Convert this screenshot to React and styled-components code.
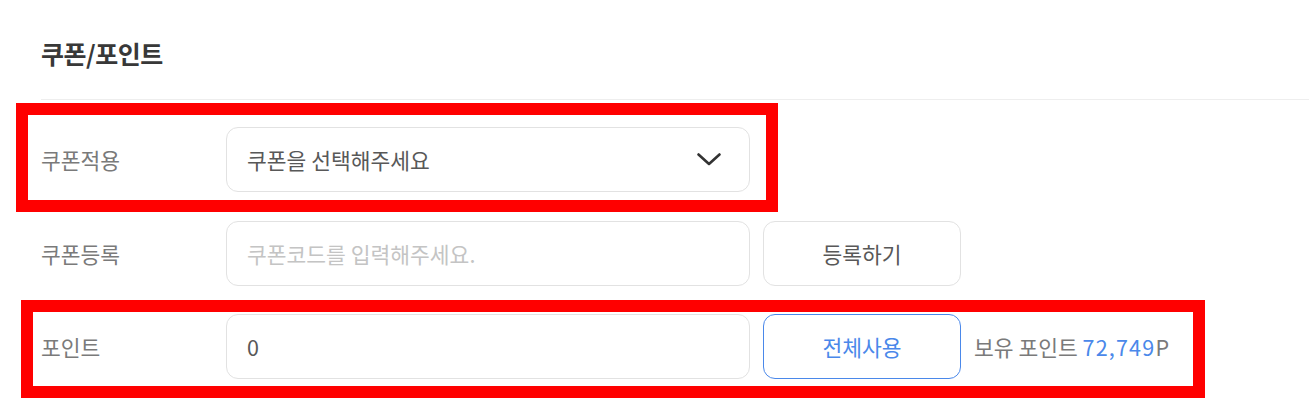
import React from 'react';
import styled, { createGlobalStyle } from 'styled-components';

const GlobalStyle = createGlobalStyle`
  * { box-sizing: border-box; }
  body {
    margin: 0;
    background: #fff;
    font-family: "Noto Sans CJK KR", "Noto Sans", sans-serif;
    color: #333;
  }
`;

const Section = styled.section`
  position: relative;
  width: 1309px;
  height: 420px;
  padding: 36px 0 0 41px;
`;

const Title = styled.h2`
  margin: 0;
  font-size: 25px;
  font-weight: 700;
  color: #383838;
  line-height: 34px;
  letter-spacing: -0.5px;
`;

const Divider = styled.hr`
  margin: 29px 0 0;
  border: 0;
  border-top: 1px solid #eeeeee;
`;

const Form = styled.div`
  display: flex;
  flex-direction: column;
  gap: 28.5px;
  padding-top: 27px;
`;

const Row = styled.div`
  display: flex;
  align-items: center;
  height: 65px;
`;

const Label = styled.div`
  width: 185px;
  font-size: 21.5px;
  color: #7a7a7a;
`;

const Field = styled.div`
  display: flex;
  align-items: center;
  justify-content: space-between;
  width: 524px;
  height: 65px;
  padding: 0 28px 0 20px;
  border: 1px solid #e2e2e2;
  border-radius: 12px;
  font-size: 21.5px;
  color: ${p => (p.$placeholder ? '#c4c4c4' : '#585858')};
`;

const Button = styled.button`
  margin-left: 13px;
  width: 198px;
  height: 65px;
  border: 1px solid ${p => (p.$primary ? '#4a88ea' : '#e2e2e2')};
  border-radius: 12px;
  background: #fff;
  font-family: inherit;
  font-size: 21.5px;
  color: ${p => (p.$primary ? '#4a88ea' : '#585858')};
`;

const Owned = styled.div`
  margin-left: 13px;
  font-size: 21.5px;
  color: #7a7a7a;
`;

const Amount = styled.span`
  letter-spacing: 1.2px;
`;

const Blue = styled.span`
  color: #4a88ea;
`;

const Highlight = styled.div`
  position: absolute;
  border: 12px solid #ff0000;
  pointer-events: none;
`;

const Chevron = () => (
  <svg width="24" height="13" viewBox="0 0 24 13" fill="none">
    <path d="M1.5 1.5 L12 11 L22.5 1.5" stroke="#333" strokeWidth="2.6" strokeLinecap="round" strokeLinejoin="round" />
  </svg>
);

export default function App() {
  return (
    <>
      <GlobalStyle />
      <Section>
        <Title>쿠폰/포인트</Title>
        <Divider />
        <Form>
          <Row>
            <Label>쿠폰적용</Label>
            <Field>
              <span>쿠폰을 선택해주세요</span>
              <Chevron />
            </Field>
          </Row>
          <Row>
            <Label>쿠폰등록</Label>
            <Field $placeholder>쿠폰코드를 입력해주세요.</Field>
            <Button>등록하기</Button>
          </Row>
          <Row>
            <Label>포인트</Label>
            <Field>0</Field>
            <Button $primary>전체사용</Button>
            <Owned>
              보유 포인트 <Amount><Blue>72,749</Blue>P</Amount>
            </Owned>
          </Row>
        </Form>
        <Highlight style={{ left: 16, top: 103, width: 762, height: 109 }} />
        <Highlight style={{ left: 21, top: 300, width: 1184, height: 98 }} />
      </Section>
    </>
  );
}
